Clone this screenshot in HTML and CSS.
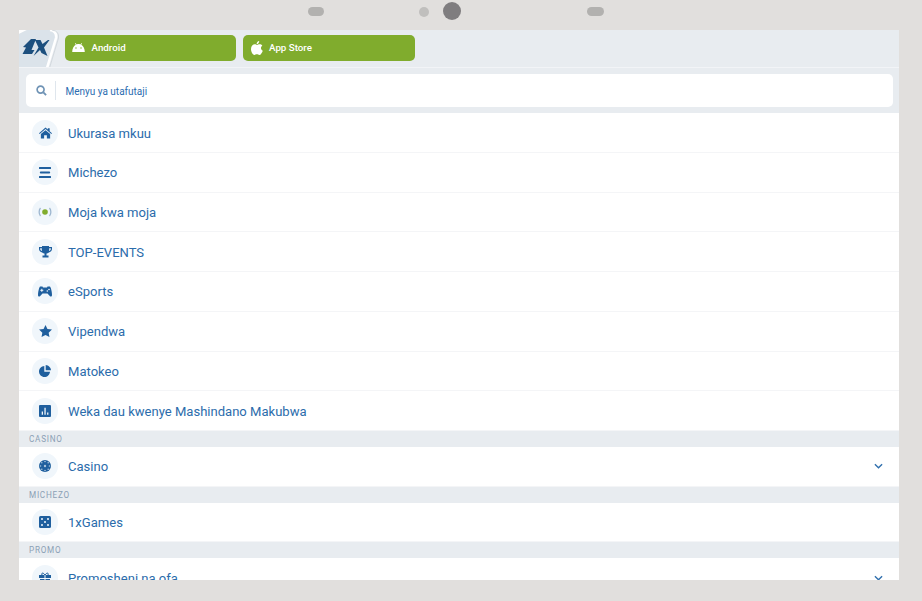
FILE: index.html
```html
<!DOCTYPE html>
<html lang="sw">
<head>
<meta charset="utf-8">
<title>Menyu</title>
<link rel="stylesheet" href="styles.css">
</head>
<body>
<div class="device-top">
  <span class="pill pill-left"></span>
  <span class="dot"></span>
  <span class="camera"></span>
  <span class="pill pill-right"></span>
</div>
<main class="screen">
  <header class="apps">
    <div class="logo">
      <svg viewBox="0 0 46 38" width="46" height="38">
        <path d="M0 0H8L0 4Z" fill="#fff"/>
        <path d="M0 4L8 0H31Q38 1 37 8L28 38H0Z" fill="#dbe3ea"/>
        <path d="M31 0Q38 1 37 8L28 38" fill="none" stroke="#fff" stroke-width="2.500"/>
        <path d="M33 0Q40.500 1 39.500 8L30.500 38" fill="none" stroke="#d3d9de" stroke-width="1"/>
        <path d="M4 17L12 9H17L12.500 20 15.500 20 13 24H3.500L7 17.500ZM16 10H21.500L23.500 14 29 10H30.500L25 17.500 28.500 26 22.500 23 21 20 14.500 26 19.500 17.500Z" fill="#1c4f7e"/>
      </svg>
    </div>
    <a class="app-btn">
      <svg class="app-icon" viewBox="0 0 14 10" width="13" height="9"><path d="M0 10C0 6 2 3 4 2L3 0.500L3.500 0L5 1.600C6.300 1 7.700 1 9 1.600L10.500 0L11 .5L10 2C12 3 14 6 14 10Z" fill="#fff"/><circle cx="4.200" cy="5.600" r=".8" fill="#80ac2d"/><circle cx="9.800" cy="5.600" r=".8" fill="#80ac2d"/></svg>
      <span>Android</span>
    </a>
    <a class="app-btn app-btn-store">
      <svg class="app-icon" viewBox="0 0 12 14" width="12" height="14"><path d="M8.200 0C8.300 1.600 7 3.200 5.600 3.100 5.500 1.600 6.800.2 8.200 0ZM6 3.900C6.800 3.900 7.500 3.300 8.700 3.300 9.700 3.300 10.700 3.800 11.300 4.700 9.300 5.900 9.600 8.800 11.800 9.700 11.100 11.500 9.800 14 8.400 14 7.300 14 7 13.300 5.900 13.300 4.700 13.300 4.300 14 3.300 14 1.700 14 0 10.800 0 8.100 0 5 2 3.300 3.800 3.300 4.800 3.300 5.400 3.900 6 3.900Z" fill="#fff"/></svg>
      <span>App Store</span>
    </a>
  </header>
  <div class="search-wrap">
    <div class="search">
      <svg class="search-icon" viewBox="0 0 12 12" width="11" height="11"><circle cx="5" cy="5" r="3.800" fill="none" stroke="#6f93b5" stroke-width="1.800"/><path d="M8 8L11 11" stroke="#6f93b5" stroke-width="2"/></svg>
      <span class="search-text">Menyu ya utafutaji</span>
    </div>
  </div>
  <nav class="menu">
    <a class="row"><span class="badge"><svg viewBox="0 0 14 12" width="13" height="12"><path d="M7 0L9.500 2.200V1H11.500V4L14 6.200 13.300 7 7 1.600 .7 7 0 6.200ZM2 7.200L7 3 12 7.200V12H8.500V8.500H5.500V12H2Z" fill="#1f5f9e"/></svg></span><span class="label">Ukurasa mkuu</span></a>
    <a class="row"><span class="badge"><svg viewBox="0 0 12 11" width="12" height="11"><path d="M.8 0H11.200A.8.8 0 0 1 11.200 2H.8A.8.8 0 0 1 .8 0ZM1.800 4.500H10.200A.8.8 0 0 1 10.200 6.500H1.800A.8.8 0 0 1 1.800 4.500ZM.8 9H11.200A.8.8 0 0 1 11.200 11H.8A.8.8 0 0 1 .8 9Z" fill="#1f5f9e"/></svg></span><span class="label">Michezo</span></a>
    <a class="row"><span class="badge"><svg viewBox="0 0 14 10" width="14" height="10"><circle cx="7" cy="5" r="2.800" fill="#80ac2d"/><path d="M2.500 1C.7 3 .7 7 2.500 9M11.500 1C13.300 3 13.300 7 11.500 9" fill="none" stroke="#9db6cf" stroke-width="1.300"/></svg></span><span class="label">Moja kwa moja</span></a>
    <a class="row"><span class="badge"><svg viewBox="0 0 13 12" width="13" height="12"><path d="M3 0H10V1H13V3C13 5 11.500 6 9.800 6.400 9 7.200 8 7.500 7.500 7.600V9.500H9.500V11.500H3.500V9.500H5.500V7.600C5 7.500 4 7.200 3.200 6.400 1.500 6 0 5 0 3V1H3ZM1.200 2.200V3C1.200 4 2 4.700 3 5 2.800 4.200 2.800 3.200 2.800 2.200ZM11.800 2.200H10.200C10.200 3.200 10.200 4.200 10 5 11 4.700 11.800 4 11.800 3Z" fill="#1f5f9e"/></svg></span><span class="label">TOP-EVENTS</span></a>
    <a class="row"><span class="badge"><svg viewBox="0 0 14 11" width="14" height="11"><path d="M2 .5H4.500L5 1.500H9L9.500 .5H12L12.800 2C13.500 4 14 7 14 9 14 10.500 12.800 11 12 10.200L9.500 7.500H4.500L2 10.200C1.200 11 0 10.500 0 9 0 7 .5 4 1.200 2Z" fill="#1f5f9e"/><path d="M3.800 2.800V5.800M2.300 4.300H5.300" stroke="#f2f7fb" stroke-width="1"/><circle cx="9.300" cy="5" r=".8" fill="#f2f7fb"/><circle cx="11" cy="3.500" r=".8" fill="#f2f7fb"/></svg></span><span class="label">eSports</span></a>
    <a class="row"><span class="badge"><svg viewBox="0 0 14 13" width="13" height="12"><path d="M7 0L9.100 4.400 14 5 10.400 8.300 11.300 13 7 10.700 2.700 13 3.600 8.300 0 5 4.900 4.400Z" fill="#1f5f9e"/></svg></span><span class="label">Vipendwa</span></a>
    <a class="row"><span class="badge"><svg viewBox="0 0 12 12" width="12" height="12"><path d="M5.300 1V6.700H11C10.800 9.600 8.300 12 5.500 12 2.500 12 0 9.500 0 6.500 0 3.700 2.400 1.200 5.300 1Z" fill="#1f5f9e"/><path d="M6.700 0C9.500 .2 11.800 2.500 12 5.300H6.700Z" fill="#1f5f9e"/></svg></span><span class="label">Matokeo</span></a>
    <a class="row"><span class="badge"><svg viewBox="0 0 12 12" width="12" height="12"><path d="M1 0H11A1 1 0 0 1 12 1V11A1 1 0 0 1 11 12H1A1 1 0 0 1 0 11V1A1 1 0 0 1 1 0Z" fill="#1f5f9e"/><path d="M2.700 6.500H4V9.800H2.700ZM5.400 2.700H6.700V9.800H5.400ZM8.100 7.500H9.400V9.800H8.100Z" fill="#f2f7fb"/></svg></span><span class="label">Weka dau kwenye Mashindano Makubwa</span></a>
    <h2 class="section">CASINO</h2>
    <a class="row"><span class="badge"><svg viewBox="0 0 12 12" width="12" height="12"><circle cx="6" cy="6" r="6" fill="#1f5f9e"/><g fill="#a9c3dc"><circle cx="6" cy="1.500" r=".8"/><circle cx="6" cy="10.500" r=".8"/><circle cx="1.500" cy="6" r=".8"/><circle cx="10.500" cy="6" r=".8"/><circle cx="2.800" cy="2.800" r=".8"/><circle cx="9.200" cy="2.800" r=".8"/><circle cx="2.800" cy="9.200" r=".8"/><circle cx="9.200" cy="9.200" r=".8"/><circle cx="6" cy="6" r="1.200"/></g></svg></span><span class="label">Casino</span><svg class="chev" viewBox="0 0 10 6" width="9" height="6"><path d="M1 1L5 5 9 1" fill="none" stroke="#2f6fad" stroke-width="1.500"/></svg></a>
    <h2 class="section">MICHEZO</h2>
    <a class="row"><span class="badge"><svg viewBox="0 0 12 12" width="12" height="12"><rect width="12" height="12" rx="1.500" fill="#1f5f9e"/><g fill="#f2f7fb"><circle cx="3" cy="3" r="1"/><circle cx="9" cy="3" r="1"/><circle cx="6" cy="6" r="1"/><circle cx="3" cy="9" r="1"/><circle cx="9" cy="9" r="1"/></g></svg></span><span class="label">1xGames</span></a>
    <h2 class="section">PROMO</h2>
    <a class="row"><span class="badge"><svg viewBox="0 0 12 12" width="12" height="12"><path d="M0 3H12V6H0ZM1 7H11V12H1Z" fill="#1f5f9e"/><path d="M6 3V12" stroke="#f2f7fb"/><path d="M6 3C4 0 2 1 3 3M6 3C8 0 10 1 9 3" fill="none" stroke="#1f5f9e"/></svg></span><span class="label">Promosheni na ofa</span><svg class="chev" viewBox="0 0 10 6" width="9" height="6"><path d="M1 1L5 5 9 1" fill="none" stroke="#2f6fad" stroke-width="1.500"/></svg></a>
  </nav>
</main>
</body>
</html>
```
FILE: styles.css
```css
* { box-sizing: border-box; }
html, body { margin: 0; height: 100%; overflow: hidden; }
body { background: #e1dfdd; font-family: Roboto, "Liberation Sans", sans-serif; width: 922px; height: 601px; }
.device-top { height: 30px; display: flex; align-items: flex-start; padding-left: 308px; }
.pill { width: 16px; height: 9px; margin-top: 7px; border-radius: 5px; background: #b2b1af; }
.dot { width: 10px; height: 10px; margin: 7px 0 0 95px; border-radius: 50%; background: #c0bfbd; }
.camera { width: 18px; height: 18px; margin: 2px 0 0 14px; border-radius: 50%; background: #7f7d7f; }
.pill-right { margin-left: 126px; width: 17px; }
.screen { margin-left: 19px; width: 880px; height: 550px; overflow: hidden; background: #fff; }
.apps { height: 37px; display: flex; align-items: flex-start; background: #e8ecf0; border-bottom: 1px solid #f2f4f7; box-sizing: content-box; }
.logo { width: 45.500px; height: 37px; flex: none; overflow: hidden; }
.app-btn { width: 171.500px; height: 26px; margin: 4.500px 7px 0 0; padding-left: 7px; display: flex; align-items: center; gap: 7px; background: #80ac2d; border-radius: 5px; color: #fff; font-size: 9.750px; font-weight: 500; }
.app-icon { flex: none; }
.app-btn-store { padding-left: 8px; gap: 6px; }
.search-wrap { height: 45.400px; padding: 6px 6px 6px 7px; background: #e8ecf0; }
.search { height: 33px; display: flex; align-items: center; background: #fff; border-radius: 5px; padding-left: 9.500px; }
.search-icon { flex: none; }
.search-text { margin-left: 8px; padding-left: 10px; height: 19px; line-height: 21px; border-left: 1px solid #dfe6ed; font-size: 10px; color: #2b6cb0; }
.menu { display: flex; flex-direction: column; }
.row { height: 39.700px; flex: none; display: flex; align-items: center; padding: 0 16px 0 13px; border-bottom: 1px solid #f4f5f7; background: #fff; }
.badge { width: 26px; height: 26px; flex: none; display: flex; align-items: center; justify-content: center; border-radius: 50%; background: #f0f6fb; }
.label { margin-left: 10px; flex: 1; padding-top: 1px; font-size: 13.050px; color: #2b6cab; }
.chev { flex: none; }
.section { margin: 0; height: 16px; flex: none; padding-left: 10px; background: #e8ecf0; color: #8ba0b5; font-size: 8.200px; line-height: 16px; font-weight: 400; letter-spacing: .75px; }
```
